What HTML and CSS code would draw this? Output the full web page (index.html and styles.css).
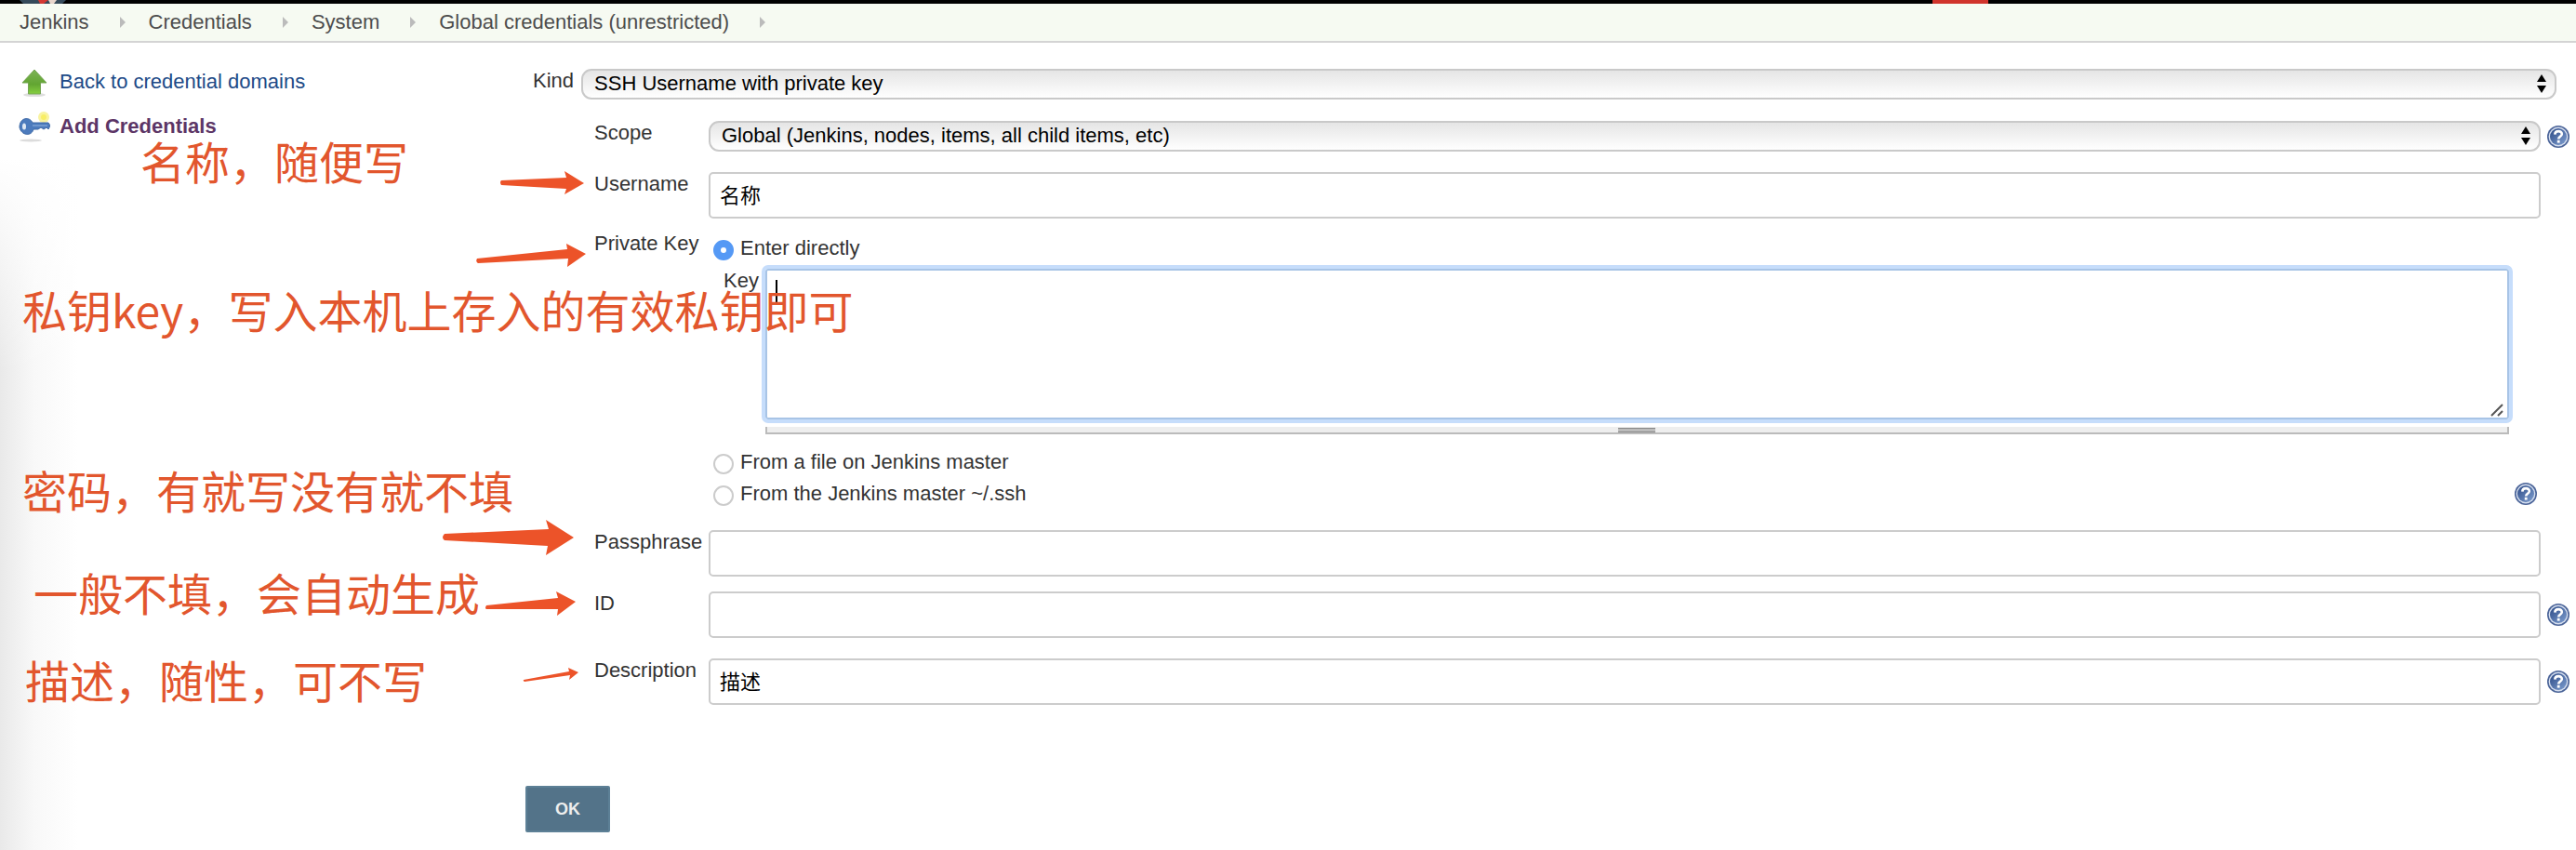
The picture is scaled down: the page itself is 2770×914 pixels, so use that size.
FILE: index.html
```html
<!DOCTYPE html>
<html lang="en">
<head>
<meta charset="utf-8">
<title>Global credentials (unrestricted) [Jenkins]</title>
<link rel="stylesheet" href="styles.css">
</head>
<body>
<svg class="defs" aria-hidden="true">
  <defs>
    <linearGradient id="help-fill" x1="0" y1="0" x2="1" y2="1">
      <stop offset="0" stop-color="#2c4a86"/><stop offset="1" stop-color="#7f9fd0"/>
    </linearGradient>
    <linearGradient id="up-fill" x1="0" y1="0" x2="0" y2="1">
      <stop offset="0" stop-color="#7db356"/><stop offset="0.6" stop-color="#62a532"/><stop offset="1" stop-color="#85cf3f"/>
    </linearGradient>
    <symbol id="help" viewBox="0 0 24 24">
      <circle cx="12" cy="12" r="12" fill="#4c6599"/>
      <circle cx="12" cy="12" r="10.4" fill="#d5deee"/>
      <circle cx="12" cy="12" r="9" fill="url(#help-fill)"/>
      <path d="M8.3 9.600C8.400 5 15.900 5 15.800 9.200C15.700 11.800 12.200 11.800 12.200 14.600" fill="none" stroke="#fff" stroke-width="2.6"/>
      <rect x="10.800" y="15.800" width="2.800" height="2.800" fill="#fff"/>
    </symbol>
  </defs>
</svg>
<header class="topbar">
  <svg class="logo" viewBox="0 0 50 4"><path d="M0 0H50L46 4H4Z" fill="#35495a"/><path d="M20 0H31L26 4H22Z" fill="#d33833"/><path d="M31 0H40L37 4H33Z" fill="#e8d5cc"/></svg>
  <span class="alert-tab"></span>
</header>
<nav class="breadcrumbs" aria-label="Breadcrumb">
  <a href="#">Jenkins</a><i class="sep"></i>
  <a href="#">Credentials</a><i class="sep"></i>
  <a href="#">System</a><i class="sep"></i>
  <a href="#">Global credentials (unrestricted)</a><i class="sep"></i>
</nav>
<div class="page">
  <aside class="side">
    <a class="task" href="#">
      <svg class="task-icon" viewBox="0 0 34 34"><ellipse cx="17" cy="31" rx="12" ry="2" fill="#dedede"/><path d="M17 4L30 18H23.500V30H10.500V18H4Z" fill="url(#up-fill)" stroke="#75a653"/></svg>
      Back to credential domains</a>
    <a class="task current" href="#">
      <svg class="task-icon" viewBox="0 0 34 34"><ellipse cx="13" cy="32" rx="12" ry="1.500" fill="#dcdcdc"/><circle cx="27" cy="7" r="6" fill="#f9f3a0"/><circle cx="27" cy="7" r="3" fill="#f8ee66"/><path d="M15 13H32L34 16L32 20L30 18L27 20L24 18L21 20H16C14 28 3 27 1 18C1 7 12 6 15 13Z" fill="#4c7bbd" stroke="#3f6aa6"/><ellipse cx="6" cy="17" rx="2" ry="3.500" fill="#dfe8f3"/><path d="M15 16H31" stroke="#7da2d4" stroke-width="1.500"/></svg>
      Add Credentials</a>
  </aside>
  <form class="main">
    <div class="kind">
      <label for="kind">Kind</label>
      <span class="select"><select id="kind"><option>SSH Username with private key</option></select><svg class="updown" viewBox="0 0 10 20"><path d="M5 0L10 8H0ZM5 20L10 12H0Z"/></svg></span>
    </div>
    <div class="fields">
      <div class="row scope">
        <label for="scope">Scope</label>
        <span class="select"><select id="scope"><option>Global (Jenkins, nodes, items, all child items, etc)</option></select><svg class="updown" viewBox="0 0 10 20"><path d="M5 0L10 8H0ZM5 20L10 12H0Z"/></svg></span>
        <button type="button" class="help" aria-label="Help for Scope"><svg><use href="#help"/></svg></button>
      </div>
      <div class="row username">
        <label for="username">Username</label>
        <input class="text" id="username" type="text" value="名称">
      </div>
      <div class="row private" role="radiogroup" aria-labelledby="pk">
        <span class="name" id="pk">Private Key</span>
        <div class="choices">
          <label class="choice"><input type="radio" name="source" checked>Enter directly</label>
          <div class="key">
            <label for="key">Key</label>
            <div class="key-box">
              <textarea id="key"></textarea>
              <i class="caret"></i>
              <svg class="grip" viewBox="0 0 14 14"><path d="M1 13L13 1M8 13L13 8" stroke="#555" stroke-width="2"/></svg>
              <div class="handle"><i></i></div>
            </div>
          </div>
          <label class="choice"><input type="radio" name="source">From a file on Jenkins master</label>
          <div class="choice-line">
            <label class="choice"><input type="radio" name="source">From the Jenkins master ~/.ssh</label>
            <button type="button" class="help" aria-label="Help for Private Key"><svg><use href="#help"/></svg></button>
          </div>
        </div>
      </div>
      <div class="row passphrase">
        <label for="passphrase">Passphrase</label>
        <input class="text" id="passphrase" type="password">
      </div>
      <div class="row ident">
        <label for="ident">ID</label>
        <input class="text" id="ident" type="text">
        <button type="button" class="help" aria-label="Help for ID"><svg><use href="#help"/></svg></button>
      </div>
      <div class="row description">
        <label for="description">Description</label>
        <input class="text" id="description" type="text" value="描述">
        <button type="button" class="help" aria-label="Help for Description"><svg><use href="#help"/></svg></button>
      </div>
    </div>
    <button type="button" class="ok">OK</button>
  </form>
</div>
<div class="notes">
  <p class="note n1">名称，随便写</p>
  <p class="note n2">私钥key，写入本机上存入的有效私钥即可</p>
  <p class="note n3">密码，有就写没有就不填</p>
  <p class="note n4">一般不填，会自动生成</p>
  <p class="note n5">描述，随性，可不写</p>
  <svg class="arrows" width="640" height="740" viewBox="0 0 640 740" fill="#ec5329">
    <path d="M539 194Q537 196 539 199L609 203L607 209L628 197L607 184L609 191Z"/>
    <path d="M513 278Q511 281 514 283L611 278L610 287L630 273L609 262L610 268Z"/>
    <path d="M478 574Q474 578 478 581L589 587L587 597L617 578L587 559L590 569Z"/>
    <path d="M523 651Q521 654 523 655L600 655L599 662L619 647L598 636L600 643Z"/>
    <path d="M563 731Q562 732 564 733L613 726L612 731L622 723L611 718L612 722Z"/>
  </svg>
</div>
</body>
</html>
```
FILE: styles.css
```css
* { box-sizing: border-box; }
body {
  margin: 0;
  min-height: 100vh;
  position: relative;
  font: 22px/26px "Liberation Sans", "Noto Sans CJK SC", sans-serif;
  color: #333;
  background:
    linear-gradient(#fff 170px, transparent 400px),
    linear-gradient(90deg, #e9e9e9, #f8f8f8 36px, #fff 84px) 0 0 / 84px 100% no-repeat #fff;
}
a { color: inherit; text-decoration: none; }
.defs { position: absolute; width: 0; height: 0; }
.topbar { height: 4px; background: #000; display: flex; justify-content: space-between; padding: 0 632px 0 21px; }
.logo { width: 50px; height: 4px; }
.alert-tab { width: 60px; background: #d0342c; }
.breadcrumbs {
  height: 42px;
  display: flex;
  align-items: center;
  padding: 0 21px;
  background: #f6faf2;
  border-bottom: 2px solid #d4d4d4;
  color: #4d4d4d;
}
.sep {
  margin: 0 25px 0 33px;
  border: solid transparent;
  border-width: 6px 0 6px 6px;
  border-left-color: #bbb;
}
.page { display: flex; }
.side { width: 565px; padding: 25px 20px; flex: none; }
.task { display: flex; align-items: center; gap: 10px; height: 34px; margin-bottom: 14px; color: #204a87; }
.task-icon { width: 34px; height: 34px; flex: none; }
.current { color: #5c3566; font-weight: bold; }
.main { flex: 1; min-width: 0; padding-top: 28px; }
.kind { display: flex; gap: 8px; padding: 0 21px 0 8px; }
.select { position: relative; flex: 1; display: flex; }
select {
  flex: 1;
  appearance: none;
  height: 33px;
  border: 2px solid #c9c9c9;
  border-radius: 11px;
  padding: 0 12px 2px;
  font: inherit;
  line-height: 26px;
  color: #000;
  background: linear-gradient(#e5e5e5, #fff);
}
.updown { position: absolute; right: 11px; top: 6px; width: 10px; height: 20px; }
.fields { padding: 23px 7px 0 74px; }
.row { display: grid; grid-template-columns: 123px 1fr 24px; align-items: start; }
.row .select, .text { margin-right: 7px; }
.text {
  height: 50px;
  min-width: 0;
  border: 2px solid #ccc;
  border-radius: 5px;
  padding: 0 10px 4px;
  font: inherit;
  color: #000;
}
.help { appearance: none; border: 0; padding: 0; background: none; width: 24px; height: 24px; align-self: center; }
.help svg { display: block; width: 24px; height: 24px; }
.username { margin-top: 22px; }
.private { margin-top: 14px; }
.choices { padding: 1px 11px 0 5px; }
.choice { display: flex; align-items: center; gap: 7px; height: 34px; }
.choice input {
  appearance: none;
  width: 22px;
  height: 22px;
  margin: 4px 0 0;
  border: 2px solid #ccc;
  border-radius: 50%;
  background: #fff;
}
.choice input:checked { border: 8px solid #5599f5; }
.key { display: flex; gap: 7px; padding: 5px 0 0 11px; margin-right: 30px; }
.key-box { position: relative; flex: 1; }
textarea {
  display: block;
  width: 100%;
  height: 162px;
  resize: none;
  border: 2px solid #a8c4e6;
  border-radius: 3px;
  outline: 4px solid #c6ddfb;
  padding: 10px;
  font: inherit;
}
.caret { position: absolute; left: 11px; top: 12px; width: 2px; height: 27px; background: #000; }
.grip { position: absolute; right: 6px; top: 145px; width: 14px; height: 14px; }
.handle { display: flex; justify-content: center; height: 8px; margin: 8px 0 13px; border: solid #bbb; border-width: 0 2px 2px; background: #eee; }
.handle i { width: 40px; height: 5px; margin-top: 1px; border: solid #888; border-width: 1px 0; background: #bbb; }
.choice-line { display: flex; justify-content: space-between; align-items: center; }
.passphrase { margin-top: 22px; }
.ident { margin-top: 16px; }
.description { margin-top: 22px; }
.ok {
  display: block;
  width: 91px;
  height: 50px;
  margin-top: 87px;
  border: 2px solid #5d8096;
  border-radius: 2px;
  background: #537389;
  color: #eee;
  font: bold 18px/26px "Liberation Sans", sans-serif;
}
.notes { position: absolute; inset: 0; pointer-events: none; overflow: hidden; }
.arrows { position: absolute; left: 0; top: 0; }
.note { position: absolute; margin: 0; color: #e2562d; font: 48px/48px "Noto Sans CJK SC", sans-serif; white-space: nowrap; }
.n1 { left: 151px; top: 148px; }
.n2 { left: 24px; top: 308px; }
.n3 { left: 24px; top: 502px; }
.n4 { left: 36px; top: 612px; }
.n5 { left: 27px; top: 706px; }
```
